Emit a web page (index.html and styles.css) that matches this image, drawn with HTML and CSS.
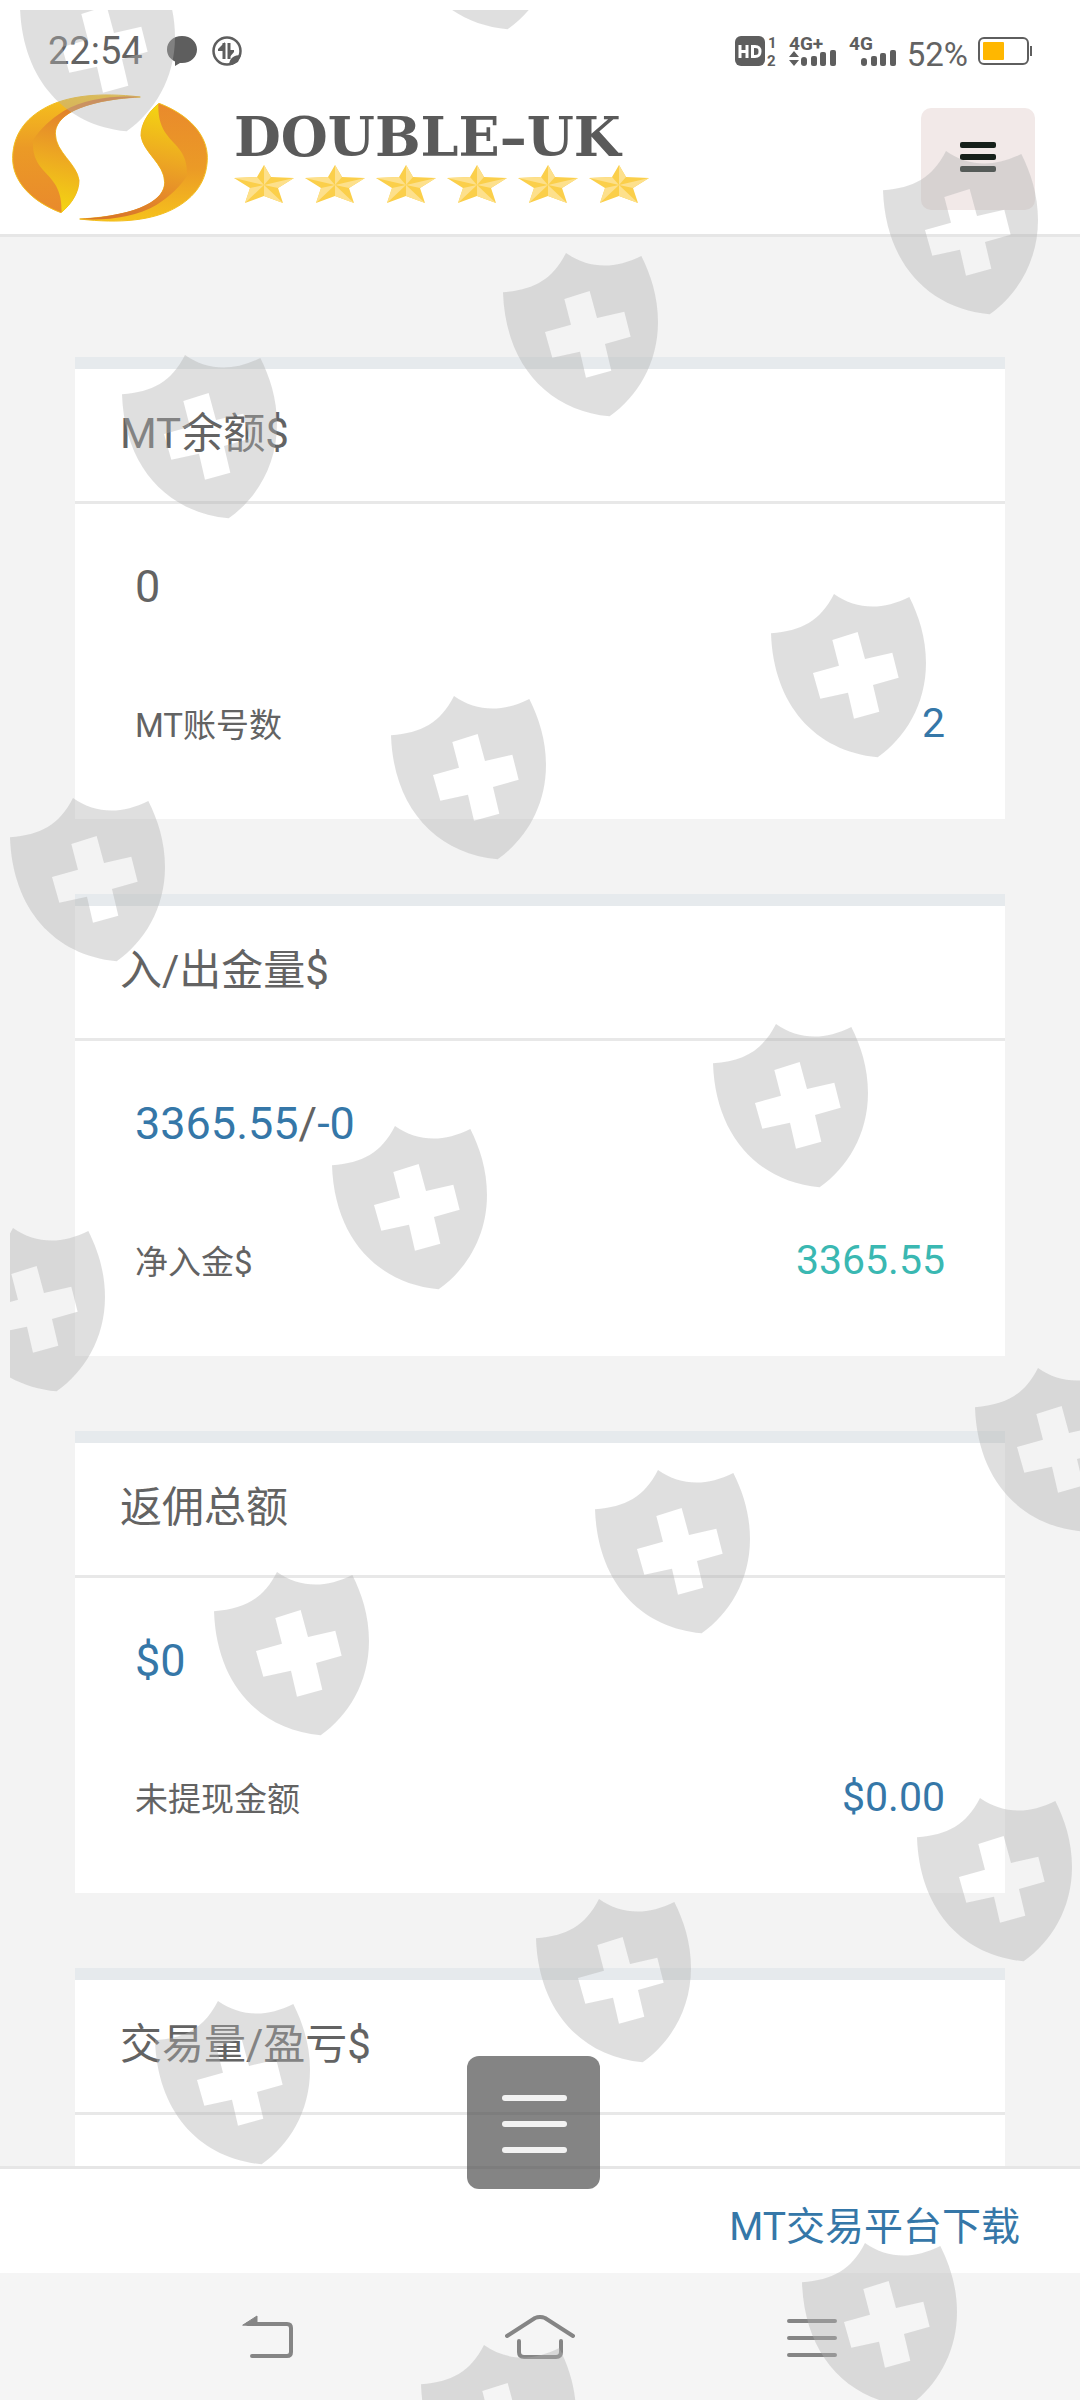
FILE: index.html
```
<!DOCTYPE html>
<html lang="zh-CN">
  <head>
    <meta charset="utf-8" />
    <meta name="viewport" content="width=device-width, initial-scale=1" />
    <title>DOUBLE-UK</title>
    <link rel="stylesheet" href="styles.css">
  </head>
  <body>
    <svg class="defs" aria-hidden="true">
      <defs>
        <linearGradient id="leafOuter" x1="0" y1="0" x2="0" y2="1">
          <stop offset="0" stop-color="#f6c21c"/>
          <stop offset="0.45" stop-color="#eb9a26"/>
          <stop offset="1" stop-color="#e98a2c"/>
        </linearGradient>
        <linearGradient id="leafInner" x1="0.5" y1="0" x2="0.3" y2="1">
          <stop offset="0" stop-color="#d9772a"/>
          <stop offset="0.25" stop-color="#e58a2a"/>
          <stop offset="0.55" stop-color="#eda822"/>
          <stop offset="1" stop-color="#f4d512"/>
        </linearGradient>
        <g id="leaf">
          <path fill="url(#leafOuter)" stroke="#f3bd1c" stroke-width="3" d="M420 50C300 36 200 45 130 85C60 125 37 180 37 235C37 300 90 362 182 397C215 370 236 335 236 300C230 250 165 215 165 160C165 110 230 60 420 50Z"/>
          <path fill="url(#leafInner)" d="M184 396C220 366 236 330 235 298C228 250 165 215 165 160C165 110 235 62 420 50C340 44 250 56 190 92C150 118 120 145 98 180C92 290 188 270 184 396Z"/>
        </g>
        <symbol id="star" viewBox="0 0 60 38">
          <path fill="#fbcf4a" d="M30 0L37 12L60 13L44 23L49 38L30 31L11 38L16 23L0 13L23 12Z"/>
          <path fill="#fde08c" d="M30 0L37 12L30 20ZM60 13L44 23L30 20ZM49 38L30 31L30 20ZM11 38L16 23L30 20ZM0 13L23 12L30 20Z"/>
        </symbol>
        <path id="shield" fill-rule="evenodd" transform="scale(0.3333) translate(-68 -68)" d="M68 186C160 178 215 150 257 68C325 115 400 118 483 77C512 135 533 200 533 275C533 400 470 500 388 558C200 540 75 400 68 186ZM252 206L272 283L194 305L216 382L299 364L317 442L393 421L374 341L451 319L432 244L350 263L328 182Z"/>
      </defs>
    </svg>

    <div class="screen">
      <header class="header">
        <div class="status">
          <span class="clock">22:54</span>
          <svg class="status-chat" width="30" height="30" viewBox="0 0 30 30">
            <path fill="#5e5e5e" d="M15 0C24 0 30 6 30 13.500C30 21 24 27 15 27L13 27L8 30V25.500C3 23 0 19 0 13.500C0 6 6 0 15 0Z"/>
          </svg>
          <svg class="status-data" width="30" height="30" viewBox="0 0 30 30" fill="none" stroke="#5e5e5e">
            <circle cx="15" cy="15" r="13.500" stroke-width="2.500"/>
            <path stroke-width="3" d="M12 23V7M17 7V23"/>
            <path fill="#5e5e5e" stroke="none" d="M13 6L6 13V15H12ZM16 23L22 16V14H17ZM17 28C18 22 22 19 29 19L26 26L20 29Z"/>
          </svg>
          <div class="status-right">
            <svg width="44" height="32" viewBox="0 0 44 32" fill="#5e5e5e">
              <rect x="0" y="1" width="30" height="30" rx="6"/>
              <path fill="none" stroke="#fff" stroke-width="3" d="M5 10V23M5 16.500H12M12 10V23M17.500 11.500V21.500H20C24 21.500 25 20 25 16.500C25 13 24 11.500 20 11.500Z"/>
              <text class="tiny" x="33" y="13">1</text>
              <text class="tiny" x="32" y="31">2</text>
            </svg>
            <svg width="50" height="32" viewBox="0 0 50 32" fill="#5e5e5e">
              <text class="net" x="0" y="15">4G+</text>
              <path d="M5 16L10 22H0ZM5 31L10 25H0Z"/>
              <rect x="12" y="22" width="6" height="9" rx="3"/>
              <rect x="22" y="21" width="6" height="10" rx="2"/>
              <rect x="31" y="17" width="6" height="14" rx="2"/>
              <rect x="41" y="15" width="6" height="16" rx="2"/>
            </svg>
            <svg width="48" height="32" viewBox="0 0 48 32" fill="#5e5e5e">
              <text class="net" x="0" y="15">4G</text>
              <rect x="12" y="23" width="6" height="8" rx="3"/>
              <rect x="22" y="21" width="6" height="10" rx="2"/>
              <rect x="31" y="18" width="6" height="13" rx="2"/>
              <rect x="41" y="15" width="6" height="16" rx="2"/>
            </svg>
            <span class="percent">52%</span>
            <svg width="54" height="28" viewBox="0 0 54 28">
              <rect x="1" y="1" width="49" height="26" rx="5" fill="none" stroke="#5e5e5e" stroke-width="2"/>
              <rect x="5" y="5" width="21" height="18" rx="1" fill="#ffb700"/>
              <rect x="52" y="9" width="2" height="10" fill="#5e5e5e"/>
            </svg>
          </div>
        </div>

        <div class="brand-bar">
          <a class="brand" href="#">
            <svg class="swirl" width="196" height="128" viewBox="35 41 588 384" aria-hidden="true">
              <use href="#leaf"/>
              <use href="#leaf" transform="rotate(180 329 233)"/>
            </svg>
            <span class="brand-text">
              <span class="brand-name">DOUBLE–UK</span>
              <span class="stars">
                <svg><use href="#star"/></svg>
                <svg><use href="#star"/></svg>
                <svg><use href="#star"/></svg>
                <svg><use href="#star"/></svg>
                <svg><use href="#star"/></svg>
                <svg><use href="#star"/></svg>
              </span>
            </span>
          </a>
          <button class="menu-btn" type="button" aria-label="菜单">
            <span></span><span></span><span></span>
          </button>
        </div>
      </header>

      <main class="cards">
        <section class="card">
          <h2 class="card-title">MT余额$</h2>
          <div class="card-body">
            <div class="value">0</div>
            <div class="row">
              <span class="label">MT账号数</span>
              <a class="amount" href="#">2</a>
            </div>
          </div>
        </section>

        <section class="card">
          <h2 class="card-title">入/出金量$</h2>
          <div class="card-body">
            <div class="value"><a href="#">3365.55</a>/<a href="#">-0</a></div>
            <div class="row">
              <span class="label">净入金$</span>
              <span class="amount net-in">3365.55</span>
            </div>
          </div>
        </section>

        <section class="card">
          <h2 class="card-title">返佣总额</h2>
          <div class="card-body">
            <div class="value"><a href="#">$0</a></div>
            <div class="row">
              <span class="label">未提现金额</span>
              <a class="amount" href="#">$0.00</a>
            </div>
          </div>
        </section>

        <section class="card">
          <h2 class="card-title">交易量/盈亏$</h2>
          <div class="card-body"></div>
        </section>
      </main>

      <footer class="footer">
        <a href="#">MT交易平台下载</a>
      </footer>

      <nav class="nav">
        <button type="button" aria-label="返回">
          <svg width="52" height="44" viewBox="0 0 52 44" fill="none" stroke="#858585" stroke-width="4" stroke-linecap="round" stroke-linejoin="round">
            <path d="M6 9H45Q49 9 49 13V37Q49 41 45 41H10"/>
            <path fill="#858585" stroke-width="1" d="M1 10L15 1V10Z"/>
          </svg>
        </button>
        <button type="button" aria-label="主页">
          <svg width="70" height="44" viewBox="0 0 70 44" fill="none" stroke="#858585" stroke-width="4" stroke-linecap="round" stroke-linejoin="round">
            <path d="M2 21L30 3Q35 1 40 3L68 21M14 26V37Q14 42 19 42H51Q56 42 56 37V26"/>
          </svg>
        </button>
        <button type="button" aria-label="最近任务">
          <svg width="52" height="44" viewBox="0 0 52 44" fill="none" stroke="#858585" stroke-width="4" stroke-linecap="round">
            <path d="M3 6H49M3 23H49M3 40H49"/>
          </svg>
        </button>
      </nav>

      <button class="float-btn" type="button" aria-label="快捷菜单">
        <span></span><span></span><span></span>
      </button>

      <!-- shield watermark over the whole screen -->
      <svg class="watermark" aria-hidden="true">
        <use href="#shield" x="20" y="-32"/>
        <use href="#shield" x="401" y="-134"/>
        <use href="#shield" x="883" y="151"/>
        <use href="#shield" x="503" y="253"/>
        <use href="#shield" x="122" y="355"/>
        <use href="#shield" x="771" y="594"/>
        <use href="#shield" x="391" y="696"/>
        <use href="#shield" x="10" y="798"/>
        <use href="#shield" x="713" y="1024"/>
        <use href="#shield" x="332" y="1126"/>
        <use href="#shield" x="-50" y="1228"/>
        <use href="#shield" x="975" y="1368"/>
        <use href="#shield" x="595" y="1470"/>
        <use href="#shield" x="214" y="1572"/>
        <use href="#shield" x="917" y="1798"/>
        <use href="#shield" x="536" y="1899"/>
        <use href="#shield" x="155" y="2001"/>
        <use href="#shield" x="802" y="2243"/>
        <use href="#shield" x="421" y="2345"/>
      </svg>
    </div>
  </body>
</html>
```

FILE: styles.css
```
* {
  box-sizing: border-box;
}

body {
  margin: 0;
  font-family: Roboto, 'Noto Sans CJK SC', sans-serif;
  color: #636363;
  background-color: #f3f3f3;
}

a {
  color: #3577a8;
  text-decoration: none;
}

button {
  padding: 0;
  border: none;
  background: none;
  cursor: pointer;
}

svg {
  display: block;
  flex-shrink: 0;
}

.defs {
  position: absolute;
  width: 0;
  height: 0;
}

.screen {
  position: relative;
  display: flex;
  flex-direction: column;
  height: 100vh;
  overflow: hidden;
}

/* Header */
.header {
  flex-shrink: 0;
  background: white;
  border-bottom: 3px solid #e6e6e6;
}

.status {
  display: flex;
  align-items: center;
  height: 94px;
  padding: 8px 48px 0;
}

.clock {
  font-size: 38px;
  line-height: 40px;
}

.status-chat {
  margin-left: 24px;
}

.status-data {
  margin-left: 15px;
}

.status-right {
  display: flex;
  align-items: center;
  gap: 10px;
  margin-left: auto;
}

.status-right svg {
  overflow: visible;
}

.percent {
  font-size: 33px;
  line-height: 40px;
  padding-top: 8px;
}

.tiny {
  font-size: 15px;
  font-weight: bold;
}

.net {
  font-size: 19px;
  font-weight: bold;
}

.brand-bar {
  display: flex;
  justify-content: space-between;
  height: 140px;
  padding: 0 45px 0 12px;
}

.brand {
  display: flex;
  gap: 26px;
}

.brand-text {
  padding-top: 18px;
}

.brand-name {
  display: block;
  font-family: 'DejaVu Serif', serif;
  font-size: 54px;
  font-weight: bold;
  line-height: 50px;
  color: #5a5a5a;
}

.stars {
  display: flex;
  gap: 11px;
  padding-top: 3px;
}

.stars svg {
  width: 60px;
  height: 38px;
}

.menu-btn {
  display: flex;
  flex-direction: column;
  align-items: center;
  justify-content: center;
  gap: 6px;
  width: 114px;
  height: 102px;
  margin-top: 14px;
  padding-bottom: 4px;
  border-radius: 10px;
  background-color: #f2e9e8;
}

.menu-btn span {
  width: 36px;
  height: 6px;
  border-radius: 2px;
  background-color: #16201a;
}

/* Cards */
.cards {
  flex: 1;
  min-height: 0;
  overflow: hidden;
  padding: 120px 75px 0;
}

.card {
  margin-bottom: 75px;
  border-top: 12px solid #e6eaed;
  background: white;
}

.card-title {
  margin: 0;
  padding: 32px 45px 34px;
  border-bottom: 3px solid #e8e8e8;
  font-size: 42px;
  font-weight: normal;
  line-height: 66px;
}

.card-body {
  min-height: 315px;
  padding: 51px 60px;
}

.value {
  font-size: 45px;
  line-height: 64px;
}

.row {
  display: flex;
  justify-content: space-between;
  align-items: baseline;
  margin-top: 74px;
  line-height: 60px;
}

.label {
  font-size: 33px;
}

.amount {
  font-size: 41px;
}

.net-in {
  color: #3ab8b2;
}

/* Bottom bars */
.footer {
  flex-shrink: 0;
  padding: 28px 60px 16px;
  border-top: 3px solid #e6e6e6;
  background: white;
  text-align: right;
  font-size: 39px;
  line-height: 60px;
}

.nav {
  display: flex;
  flex-shrink: 0;
  align-items: center;
  justify-content: space-between;
  height: 127px;
  padding: 0 242px;
  background-color: #f5f5f5;
}

.float-btn {
  position: absolute;
  left: 50%;
  bottom: 211px;
  display: flex;
  flex-direction: column;
  align-items: center;
  justify-content: center;
  gap: 20px;
  width: 133px;
  height: 133px;
  margin-left: -73px;
  padding: 3px 0 0 2px;
  border-radius: 12px;
  background-color: rgba(80, 80, 80, 0.7);
}

.float-btn span {
  width: 65px;
  height: 6px;
  border-radius: 3px;
  background-color: #f2f2f2;
}

.watermark {
  position: absolute;
  inset: 0;
  width: 100%;
  height: 100%;
  clip-path: inset(10px 0 0 10px);
  fill: rgba(178, 178, 178, 0.41);
  pointer-events: none;
}
```
